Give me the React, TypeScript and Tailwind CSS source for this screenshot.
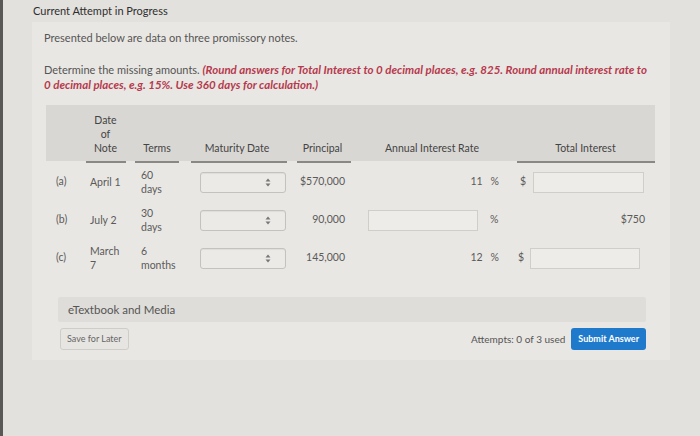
import React from 'react';

const font = { fontFamily: 'Lato, "Open Sans", sans-serif' };
const cols = 'grid grid-cols-[37px_45px_58px_106px_63px_153px_147px]';

function Select() {
  return (
    <div className="flex h-[21px] w-[86px] items-center justify-end rounded-[3px] border border-[#c4c2be] bg-[#eceae6] pr-[14px] shadow-[inset_0_1px_1px_rgba(0,0,0,0.06)]">
      <svg width="6" height="9" viewBox="0 0 6 9">
        <path d="M3 0.5 L5.5 3.5 L0.5 3.5 Z" fill="#777" />
        <path d="M3 8.5 L5.5 5.5 L0.5 5.5 Z" fill="#777" />
      </svg>
    </div>
  );
}

function Input({ w }: { w: number }) {
  return <div className="h-[21px] border border-[#d0cec9] bg-[#eeece8]" style={{ width: w }} />;
}

function Row({
  label,
  date,
  terms,
  principal,
  rate,
  total,
}: {
  label: string;
  date: string[];
  terms: string[];
  principal: string;
  rate: React.ReactNode;
  total: React.ReactNode;
}) {
  return (
    <div className={`${cols} h-[38px] items-center text-[10.5px] text-[#5a5a5a]`}>
      <div className="pl-[10px]">{label}</div>
      <div className="flex flex-col pl-[7px] leading-[14px]">
        {date.map((d) => (
          <span key={d}>{d}</span>
        ))}
      </div>
      <div className="flex flex-col pl-[13px] leading-[14px]">
        {terms.map((t) => (
          <span key={t}>{t}</span>
        ))}
      </div>
      <div className="pl-[14px]">
        <Select />
      </div>
      <div className="pr-[10px] text-right">{principal}</div>
      <div>{rate}</div>
      <div>{total}</div>
    </div>
  );
}

export default function App() {
  return (
    <div className="h-[436px] w-full overflow-hidden border-l-[3px] border-[#5a5856] bg-[#e3e1dd]" style={font}>
      <div className="pl-[30px] pt-[3px] text-[11px] leading-[16px] text-[#2e2e2e]">Current Attempt in Progress</div>
      <div className="ml-[29px] mt-[3px] w-[638px] bg-[#e9e7e3] pb-[10px] pl-[12px] pt-[8px]">
        <p className="text-[11px] leading-[16px] text-[#555]">Presented below are data on three promissory notes.</p>
        <p className="mt-[16px] text-[11px] leading-[15px] text-[#555]">
          Determine the missing amounts.{' '}
          <span className="text-[11.5px] font-bold italic text-[#b63a4e]">
            (Round answers for Total Interest to 0 decimal places, e.g. 825. Round annual interest rate to
            <br />0 decimal places, e.g. 15%. Use 360 days for calculation.)
          </span>
        </p>

        <div className="ml-[2px] mt-[13px] w-[609px]">
          <div className={`${cols} h-[56px] items-end bg-[#d9d7d3] pb-[6px] text-[10.5px] leading-[14px] text-[#444]`}>
            <div />
            <div className="flex flex-col items-center">
              <span>Date</span>
              <span>of</span>
              <span>Note</span>
            </div>
            <div className="text-center">Terms</div>
            <div className="pr-[4px] text-center">Maturity Date</div>
            <div className="pr-[2px] text-center">Principal</div>
            <div className="pl-[30px]">Annual Interest Rate</div>
            <div className="pl-[8px] text-center">Total Interest</div>
          </div>
          <div className={`${cols} h-[2px]`}>
            <div />
            <div className="flex justify-center"><div className="h-[2px] w-[40px] bg-[#8a8884]" /></div>
            <div className="flex justify-center"><div className="h-[2px] w-[44px] bg-[#8a8884]" /></div>
            <div className="flex justify-center"><div className="h-[2px] w-[96px] bg-[#8a8884]" /></div>
            <div className="flex justify-center"><div className="h-[2px] w-[54px] bg-[#8a8884]" /></div>
            <div />
            <div className="flex justify-end"><div className="h-[2px] w-[138px] bg-[#8a8884]" /></div>
          </div>

          <Row
            label="(a)"
            date={['April 1']}
            terms={['60', 'days']}
            principal="$570,000"
            rate={
              <div className="flex justify-end gap-[8px] pr-[9px]">
                <span>11</span>
                <span>%</span>
              </div>
            }
            total={
              <div className="flex items-center pl-[12px]">
                <span className="w-[13px]">$</span>
                <Input w={111} />
              </div>
            }
          />
          <Row
            label="(b)"
            date={['July 2']}
            terms={['30', 'days']}
            principal="90,000"
            rate={
              <div className="flex items-center pl-[13px]">
                <Input w={110} />
                <span className="ml-[12px]">%</span>
              </div>
            }
            total={<div className="pr-[10px] text-right">$750</div>}
          />
          <Row
            label="(c)"
            date={['March', '7']}
            terms={['6', 'months']}
            principal="145,000"
            rate={
              <div className="flex justify-end gap-[8px] pr-[9px]">
                <span>12</span>
                <span>%</span>
              </div>
            }
            total={
              <div className="flex items-center pl-[10px]">
                <span className="w-[12px]">$</span>
                <Input w={110} />
              </div>
            }
          />
        </div>

        <div className="ml-[14px] mt-[20px] flex h-[25px] w-[588px] items-center rounded-[2px] bg-[#dfddd9] pl-[10px] text-[11.5px] text-[#555]">
          eTextbook and Media
        </div>
        <div className="ml-[16px] mr-[10px] mt-[6px] flex items-center justify-between">
          <button className="h-[22px] rounded-[3px] border border-[#cfcdc8] bg-[#e7e5e1] px-[6px] text-[9px] text-[#666]">
            Save for Later
          </button>
          <div className="flex items-center gap-[6px] pr-[14px]">
            <span className="text-[10px] text-[#555]">Attempts: 0 of 3 used</span>
            <button className="h-[22px] rounded-[3px] bg-[#1f7acb] px-[7px] text-[9px] font-bold text-white">
              Submit Answer
            </button>
          </div>
        </div>
      </div>
    </div>
  );
}
